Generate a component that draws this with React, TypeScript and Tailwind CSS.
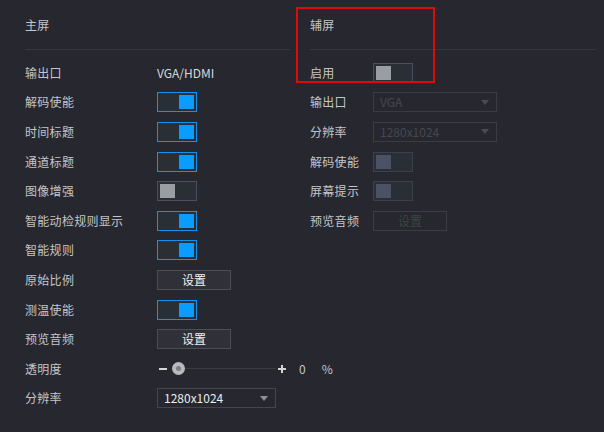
import React from "react";

const FONT = {
  fontFamily: '"Noto Sans CJK SC", "Noto Sans", "Liberation Sans", sans-serif',
};

type Props = { on?: boolean; disabled?: boolean };

function Toggle({ on, disabled }: Props) {
  if (disabled) {
    return (
      <div className="flex h-[20px] w-[40px] border border-[#3a404c] bg-[#2a2f36] p-[2px]">
        <div className="h-full w-[15px] bg-[#4c5266]" />
      </div>
    );
  }
  if (on) {
    return (
      <div className="flex h-[20px] w-[40px] justify-end border border-[#1590f0] bg-[#2a2f36] p-[2px]">
        <div className="h-full w-[15px] bg-[#0a9cff]" />
      </div>
    );
  }
  return (
    <div className="flex h-[20px] w-[40px] border border-[#4a5060] bg-[#2a2f36] p-[2px]">
      <div className="h-full w-[15px] bg-[#9a9ea4]" />
    </div>
  );
}

function SetButton({ disabled }: { disabled?: boolean }) {
  return (
    <div
      className={
        disabled
          ? "flex h-[20px] w-[74px] items-center justify-center border border-[#3c3e46] text-[12px] text-[#3b4640]"
          : "flex h-[20px] w-[74px] items-center justify-center border border-[#4c4e56] bg-[#2f3038] text-[12px] text-[#f2f2f2]"
      }
    >
      设置
    </div>
  );
}

function Select({ value, width, disabled }: { value: string; width: string; disabled?: boolean }) {
  return (
    <div
      className={`flex h-[20px] items-center justify-between border pl-[6px] pr-[7px] text-[12px] ${width} ${
        disabled ? "border-[#3a3c44] text-[#464850]" : "border-[#44464e] text-[#ececec]"
      }`}
    >
      <span>{value}</span>
      <svg width="8" height="5" viewBox="0 0 8 5">
        <path d="M0 0h8L4 5z" fill={disabled ? "#4a4c54" : "#8e9096"} />
      </svg>
    </div>
  );
}

function Row({ label, children, ctrl }: { label: string; children?: React.ReactNode; ctrl: string }) {
  return (
    <div className="flex h-[29.6px] items-center">
      <div className={`${ctrl} shrink-0 text-[12px] tracking-[0.3px] text-[#c4c5c8]`}>{label}</div>
      {children}
    </div>
  );
}

export default function App() {
  return (
    <div
      className="relative flex h-[432px] w-[604px] overflow-hidden bg-[#26272f] pl-[25px]"
      style={FONT}
    >
      {/* 主屏 */}
      <div className="w-[265px]">
        <div className="flex h-[50px] items-center border-b border-[#363840] text-[12px] tracking-[0.3px] text-[#c4c5c8]">
          主屏
        </div>
        <div className="pt-[8px]">
          <Row label="输出口" ctrl="w-[132px]">
            <span className="text-[12px] text-[#d8d9db]">VGA/HDMI</span>
          </Row>
          <Row label="解码使能" ctrl="w-[132px]">
            <Toggle on />
          </Row>
          <Row label="时间标题" ctrl="w-[132px]">
            <Toggle on />
          </Row>
          <Row label="通道标题" ctrl="w-[132px]">
            <Toggle on />
          </Row>
          <Row label="图像增强" ctrl="w-[132px]">
            <Toggle />
          </Row>
          <Row label="智能动检规则显示" ctrl="w-[132px]">
            <Toggle on />
          </Row>
          <Row label="智能规则" ctrl="w-[132px]">
            <Toggle on />
          </Row>
          <Row label="原始比例" ctrl="w-[132px]">
            <SetButton />
          </Row>
          <Row label="测温使能" ctrl="w-[132px]">
            <Toggle on />
          </Row>
          <Row label="预览音频" ctrl="w-[132px]">
            <SetButton />
          </Row>
          <Row label="透明度" ctrl="w-[132px]">
            <div className="flex items-center">
              <div className="ml-[2px] h-[2px] w-[8px] bg-[#d6d6d8]" />
              <div className="relative ml-[5px] flex h-[14px] w-[104px] items-center">
                <div className="h-px w-full bg-[#3a3c44]" />
                <div className="absolute left-0 flex h-[13px] w-[13px] items-center justify-center rounded-full bg-[#b9babd]">
                  <div className="h-[5px] w-[5px] rounded-full bg-[#7d7e83]" />
                </div>
              </div>
              <div className="relative ml-[2px] h-[8px] w-[8px]">
                <div className="absolute left-0 top-[3px] h-[2px] w-[8px] bg-[#d6d6d8]" />
                <div className="absolute left-[3px] top-0 h-[8px] w-[2px] bg-[#d6d6d8]" />
              </div>
              <span className="ml-[13px] text-[12px] text-[#c4c5c8]">0</span>
              <span className="ml-[16px] text-[12px] text-[#c4c5c8]">%</span>
            </div>
          </Row>
          <Row label="分辨率" ctrl="w-[132px]">
            <Select value="1280x1024" width="w-[119px]" />
          </Row>
        </div>
      </div>

      {/* 辅屏 */}
      <div className="ml-[20px] w-[286px]">
        <div className="flex h-[50px] items-center border-b border-[#363840] text-[12px] tracking-[0.3px] text-[#c4c5c8]">
          辅屏
        </div>
        <div className="pt-[8px]">
          <Row label="启用" ctrl="w-[63px]">
            <Toggle />
          </Row>
          <Row label="输出口" ctrl="w-[63px]">
            <Select value="VGA" width="w-[124px]" disabled />
          </Row>
          <Row label="分辨率" ctrl="w-[63px]">
            <Select value="1280x1024" width="w-[124px]" disabled />
          </Row>
          <Row label="解码使能" ctrl="w-[63px]">
            <Toggle disabled />
          </Row>
          <Row label="屏幕提示" ctrl="w-[63px]">
            <Toggle disabled />
          </Row>
          <Row label="预览音频" ctrl="w-[63px]">
            <SetButton disabled />
          </Row>
        </div>
      </div>

      {/* highlight frame */}
      <div className="pointer-events-none absolute left-[296px] top-[7px] h-[76px] w-[139px] border-2 border-[#e00a0a]" />
    </div>
  );
}
